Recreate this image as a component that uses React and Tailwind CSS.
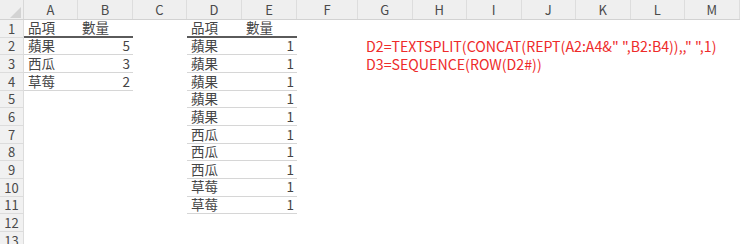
import React from "react"

const cols = [
  { name: "A", w: "w-[54px]" },
  { name: "B", w: "w-[55px]" },
  { name: "C", w: "w-[54px]" },
  { name: "D", w: "w-[55px]" },
  { name: "E", w: "w-[55px]" },
  { name: "F", w: "w-[61px]" },
  { name: "G", w: "w-[54.5px]" },
  { name: "H", w: "w-[54.5px]" },
  { name: "I", w: "w-[54.5px]" },
  { name: "J", w: "w-[54.5px]" },
  { name: "K", w: "w-[54.5px]" },
  { name: "L", w: "w-[54.5px]" },
  { name: "M", w: "w-[54.5px]" },
]

const left = [["品項", "數量"], ["蘋果", 5], ["西瓜", 3], ["草莓", 2]]
const right = [
  ["品項", "數量"],
  ["蘋果", 1], ["蘋果", 1], ["蘋果", 1], ["蘋果", 1], ["蘋果", 1],
  ["西瓜", 1], ["西瓜", 1], ["西瓜", 1],
  ["草莓", 1], ["草莓", 1],
]

const formulas = {
  2: 'D2=TEXTSPLIT(CONCAT(REPT(A2:A4&" ",B2:B4)),," ",1)',
  3: "D3=SEQUENCE(ROW(D2#))",
}

function Cell({ row, ci }) {
  const w = cols[ci].w
  let table = null
  let r = row - 1
  if (ci <= 1 && r < left.length) table = left
  if ((ci === 3 || ci === 4) && r < right.length) table = right
  if (table) {
    const val = table[r][ci === 0 || ci === 3 ? 0 : 1]
    const isNum = typeof val === "number"
    const border = r === 0 ? "border-b-2 border-[#5a5a5a]" : "border-b border-[#d6d6d6]"
    return (
      <div className={`${w} shrink-0 h-full flex items-center ${border} ${isNum ? "justify-end pr-[3px]" : "pl-[4px]"}`}>
        {val}
      </div>
    )
  }
  if (ci === 6 && formulas[row]) {
    return (
      <div className={`${w} shrink-0 h-full flex items-center pl-[8px] whitespace-nowrap text-[#ee2a2a] text-[14.2px] z-10`}>
        {formulas[row]}
      </div>
    )
  }
  return <div className={`${w} shrink-0 h-full`} />
}

export default function App() {
  const rows = Array.from({ length: 13 }, (_, i) => i + 1)
  return (
    <div className="w-[740px] h-[244px] overflow-hidden bg-white text-[#454545] text-[13.5px] font-['Noto_Sans_CJK_TC','Noto_Sans',sans-serif]">
      {/* column headers */}
      <div className="flex h-[20px] bg-[#efefef] border-b border-[#d2d2d2] text-[#4a4a4a] text-[13px]">
        <div className="w-[24px] shrink-0 h-full relative border-r border-[#d8d8d8]">
          <svg className="absolute inset-0" width="24" height="20" viewBox="0 0 24 20">
            <polygon points="10,18 21,18 21,7" fill="#d3d3d3" />
          </svg>
        </div>
        {cols.map((c) => (
          <div key={c.name} className={`${c.w} shrink-0 h-full flex items-center justify-center border-r border-[#dddddd]`}>
            {c.name}
          </div>
        ))}
      </div>
      {/* rows */}
      {rows.map((row) => (
        <div key={row} className="flex h-[17.66px] leading-none">
          <div className="w-[24px] shrink-0 h-full flex items-center justify-center bg-[#f1f1f1] border-r border-b border-[#dcdcdc] text-[#4a4a4a] text-[13px]">
            {row}
          </div>
          {cols.map((c, ci) => (
            <Cell key={c.name} row={row} ci={ci} />
          ))}
        </div>
      ))}
    </div>
  )
}
